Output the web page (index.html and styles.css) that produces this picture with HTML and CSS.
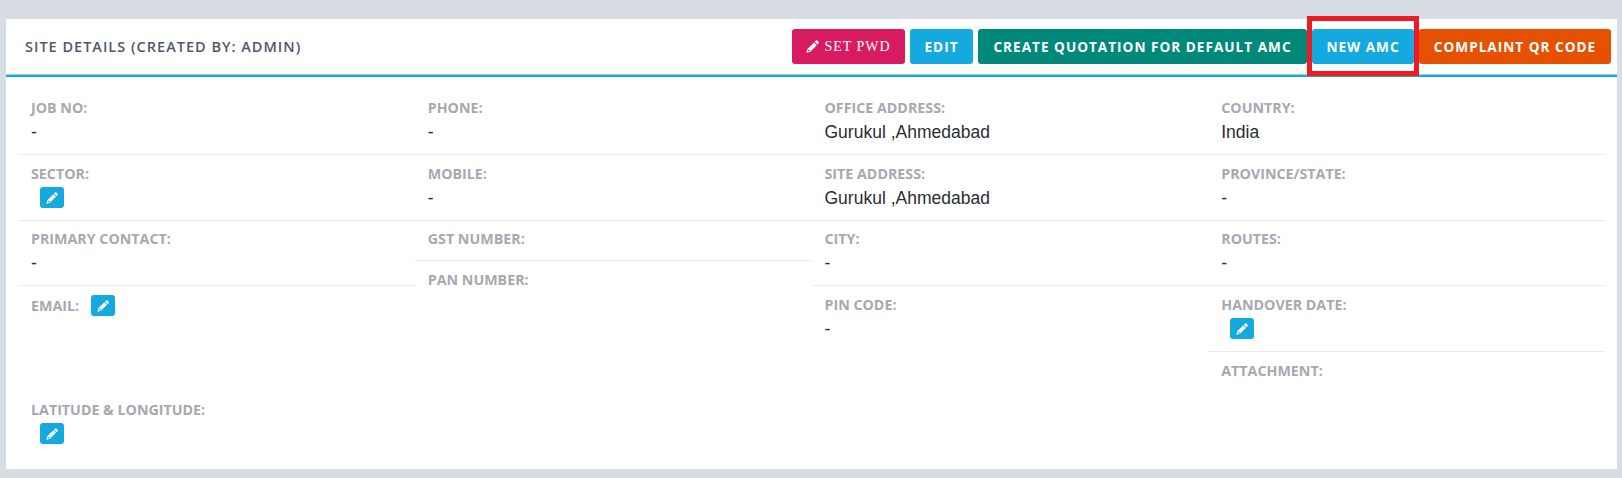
FILE: index.html
```html
<!DOCTYPE html>
<html lang="en">
<head>
<meta charset="utf-8">
<title>Site Details</title>
<link rel="stylesheet" href="styles.css">
</head>
<body>
<svg class="sprite" width="0" height="0" aria-hidden="true">
  <symbol id="pencil" viewBox="0 0 14 14">
    <path d="M8.6 2.6 11.6 5.6 4.9 12.3 1 13.6 0.4 13 1.8 9.4Z M2.7 10.2 2 11.9 2.4 12.2 4.2 11.6 4 10.6 3.1 10.4Z" fill-rule="evenodd"/>
    <path d="M9.3 1.9 10.4 0.8C11 0.2 11.7 0.2 12.3 0.8L13.4 1.9C14 2.5 14 3.2 13.4 3.8L12.3 4.9Z"/>
  </symbol>
</svg>
<main class="card">
  <header class="card-head">
    <h1 class="title">SITE DETAILS (CREATED BY: ADMIN)</h1>
    <div class="actions">
      <button class="btn btn-pink btn-serif"><svg class="ico"><use href="#pencil"/></svg>SET PWD</button>
      <button class="btn btn-blue btn-edit">EDIT</button>
      <button class="btn btn-teal btn-quote">CREATE QUOTATION FOR DEFAULT AMC</button>
      <button class="btn btn-blue btn-new">NEW AMC</button>
      <button class="btn btn-orange btn-qr">COMPLAINT QR CODE</button>
      <span class="highlight"></span>
    </div>
  </header>
  <section class="fields">
    <div class="col">
      <div class="field"><div class="label">JOB NO:</div><div class="value">-</div></div>
      <div class="field"><div class="label">SECTOR:</div><div class="value"><button class="pen"><svg class="ico-sm"><use href="#pencil"/></svg></button></div></div>
      <div class="field tight"><div class="label">PRIMARY CONTACT:</div><div class="value">-</div></div>
      <div class="field plain email"><div class="label label-row">EMAIL:<button class="pen pen-inline"><svg class="ico-sm"><use href="#pencil"/></svg></button></div></div>
      <div class="field plain"><div class="label">LATITUDE &amp; LONGITUDE:</div><div class="value"><button class="pen"><svg class="ico-sm"><use href="#pencil"/></svg></button></div></div>
    </div>
    <div class="col">
      <div class="field"><div class="label">PHONE:</div><div class="value">-</div></div>
      <div class="field"><div class="label">MOBILE:</div><div class="value">-</div></div>
      <div class="field gst"><div class="label">GST NUMBER:</div></div>
      <div class="field plain"><div class="label">PAN NUMBER:</div></div>
    </div>
    <div class="col">
      <div class="field"><div class="label">OFFICE ADDRESS:</div><div class="value">Gurukul ,Ahmedabad</div></div>
      <div class="field"><div class="label">SITE ADDRESS:</div><div class="value">Gurukul ,Ahmedabad</div></div>
      <div class="field tight"><div class="label">CITY:</div><div class="value">-</div></div>
      <div class="field plain"><div class="label">PIN CODE:</div><div class="value">-</div></div>
    </div>
    <div class="col">
      <div class="field"><div class="label">COUNTRY:</div><div class="value">India</div></div>
      <div class="field"><div class="label">PROVINCE/STATE:</div><div class="value">-</div></div>
      <div class="field tight"><div class="label">ROUTES:</div><div class="value">-</div></div>
      <div class="field"><div class="label">HANDOVER DATE:</div><div class="value"><button class="pen"><svg class="ico-sm"><use href="#pencil"/></svg></button></div></div>
      <div class="field plain"><div class="label">ATTACHMENT:</div></div>
    </div>
  </section>
</main>
</body>
</html>
```
FILE: styles.css
```css
* { box-sizing: border-box; }
html, body { margin: 0; height: 478px; overflow: hidden; }
body {
  background: #d8dce3;
  padding: 19px 5px 9px 6px;
  font-family: "Open Sans", sans-serif;
}
.sprite { position: absolute; }
.card { background: #fff; height: 450px; }
.card-head {
  height: 58px;
  padding: 10px 6px 0 19px;
  display: flex;
  justify-content: space-between;
  align-items: flex-start;
  border-bottom: 2px solid #14a9df;
  box-shadow: inset 0 -1px 0 #8fd5ef;
}
.title {
  margin: 0;
  font-size: 14.5px;
  font-weight: 600;
  line-height: 35px;
  letter-spacing: 1px;
  color: #50586a;
}
.actions { display: flex; gap: 5px; position: relative; }
.btn {
  height: 35px;
  padding: 0;
  border: 0;
  border-radius: 3px;
  color: #fff;
  font-family: "Open Sans", sans-serif;
  font-size: 13.6px;
  font-weight: 700;
  letter-spacing: 1px;
  display: flex;
  align-items: center;
  justify-content: center;
  white-space: nowrap;
}
.btn-serif {
  width: 113px;
  font-family: "Liberation Serif", serif;
  font-weight: 400;
  font-size: 14px;
}
.btn-edit { width: 63px; }
.btn-quote { width: 329px; }
.btn-new { width: 102px; }
.btn-qr { width: 192px; }
.btn-pink { background: #d81b60; }
.btn-blue { background: #14a9df; }
.btn-teal { background: #00897b; }
.btn-orange { background: #e65100; }
.ico { width: 13px; height: 13px; margin-right: 5px; fill: #fff; }
.highlight {
  position: absolute;
  left: 515px;
  top: -13px;
  width: 112px;
  height: 60px;
  border: 5px solid #ed1c24;
}
.fields {
  display: grid;
  grid-template-columns: repeat(4, 1fr);
  padding: 12px 12px 0;
}
.col { display: flex; flex-direction: column; }
.field {
  padding: 11px 13px 11px;
  border-bottom: 1px solid #e9ebee;
}
.field.plain { border-bottom: 0; }
.field.tight { padding-top: 10px; }
.field.gst { padding: 10px 13px 13px; }
.field.email { height: 105px; }
.label {
  font-size: 14.25px;
  font-weight: 700;
  line-height: 15px;
  height: 16px;
  color: #a8a8b0;
}
.label-row { display: flex; align-items: center; }
.value {
  margin-top: 5px;
  height: 22px;
  font-family: "Liberation Sans", sans-serif;
  font-size: 17.5px;
  line-height: 22px;
  color: #2a2d33;
}
.pen {
  display: flex;
  align-items: center;
  justify-content: center;
  width: 24px;
  height: 21px;
  margin: 2px 0 0 9px;
  padding: 0;
  border: 0;
  border-radius: 3px;
  background: #14a9df;
}
.pen-inline { margin: 1px 0 0 12px; flex: none; }
.ico-sm { width: 12px; height: 12px; fill: #fff; }
```
